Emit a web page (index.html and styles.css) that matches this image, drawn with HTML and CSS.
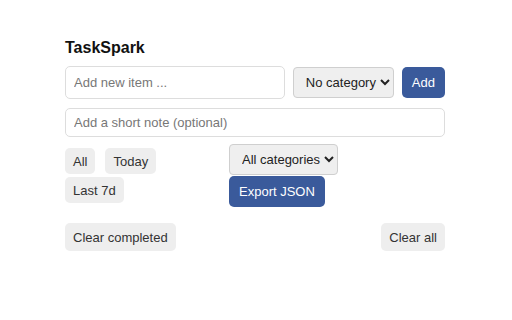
FILE: index.html
```html
<!DOCTYPE html>
<html>
<head>
  <title>TaskSpark</title>
  <meta charset="UTF-8">
  <link rel="stylesheet" href="styles.css">
</head>
<body>
  <div class="app">
    <h1>TaskSpark</h1>

    <div class="add-row">
      <input type="text" id="newItem" class="item-input" placeholder="Add new item ...">
      <select id="newCategory" class="select">
        <option>No category</option>
      </select>
      <button id="addItem" class="btn primary">Add</button>
    </div>

    <input type="text" id="newNote" class="note-input" placeholder="Add a short note (optional)">

    <div class="toolbar">
      <div class="filters">
        <button class="btn">All</button>
        <button class="btn">Today</button>
        <button class="btn">Last 7d</button>
      </div>
      <div class="tools">
        <select id="categoryFilter" class="select">
          <option>All categories</option>
        </select>
        <button id="exportJson" class="btn primary">Export JSON</button>
      </div>
    </div>

    <div class="footer">
      <button id="clearCompleted" class="btn">Clear completed</button>
      <button id="clearAll" class="btn">Clear all</button>
    </div>
  </div>
</body>
</html>
```

FILE: styles.css
```css
:root {
  --primary-color: #3a5a9b;
  --btn-bg: #eeeeee;
  --border-color: #dddddd;
  --radius: 5px;
}

body {
  margin: 0;
  font-family: 'Liberation Sans', Arial, sans-serif;
  color: #222;
  background: #fff;
}

.app {
  width: 380px;
  margin: 0 auto;
  padding-top: 39px;
  transform: translateX(-1px);
}

h1 {
  font-size: 16px;
  font-weight: bold;
  margin: 0 0 9px;
  color: #111;
}

.add-row {
  display: flex;
  align-items: center;
  gap: 8px;
}

input[type="text"] {
  font-family: inherit;
  font-size: 13px;
  color: #222;
  border: 1px solid var(--border-color);
  border-radius: var(--radius);
  padding: 0 8px;
  box-sizing: border-box;
  outline: none;
}

input::placeholder {
  color: #777;
}

.item-input {
  flex: 1;
  height: 33px;
}

.note-input {
  display: block;
  width: 100%;
  height: 29px;
  margin-top: 9px;
}

.select {
  font-family: inherit;
  font-size: 13px;
  color: #222;
  height: 31px;
  padding: 0 0 0 8px;
  background-color: #efefef;
  border: 1px solid #cfcfcf;
  border-radius: 4px;
}

.btn {
  font-family: inherit;
  font-size: 13px;
  color: #333;
  background-color: var(--btn-bg);
  border: none;
  border-radius: var(--radius);
  padding: 5px 8px;
  height: 26px;
  cursor: pointer;
}

.btn.primary {
  background-color: var(--primary-color);
  color: #fff;
  height: 31px;
  padding: 0 10px;
}

.add-row .btn.primary {
  padding: 0 10px;
}

.toolbar {
  display: flex;
  gap: 8px;
  margin-top: 7px;
}

.filters {
  width: 156px;
  display: flex;
  flex-wrap: wrap;
  align-content: flex-start;
  gap: 3px 10px;
  padding-top: 4px;
}

.tools {
  display: flex;
  flex-direction: column;
  align-items: flex-start;
  gap: 1px;
}

.footer {
  display: flex;
  justify-content: space-between;
  margin-top: 16px;
}

.footer .btn {
  height: 28px;
}
```
